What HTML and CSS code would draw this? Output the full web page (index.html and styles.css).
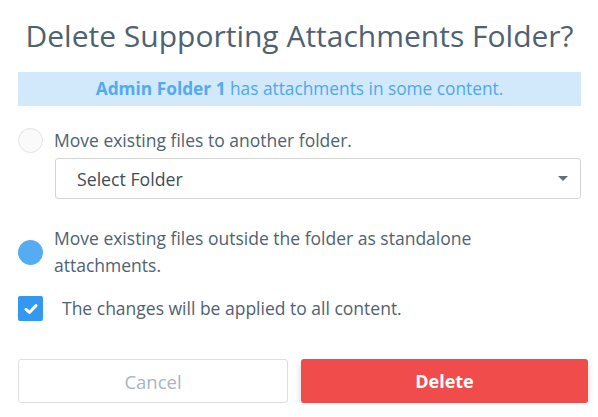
FILE: index.html
```html
<!DOCTYPE html>
<html>
<head>
<meta charset="utf-8">
<link rel="stylesheet" href="styles.css">
</head>
<body>
<div class="dialog">
  <h1 class="title">Delete Supporting Attachments Folder?</h1>
  <div class="banner"><strong>Admin Folder 1</strong> has attachments in some content.</div>
  <div class="option">
    <span class="radio"></span>
    <span class="label">Move existing files to another folder.</span>
  </div>
  <div class="select">
    <span>Select Folder</span>
    <span class="caret"></span>
  </div>
  <div class="option option-two">
    <span class="radio radio-on"></span>
    <span class="label">Move existing files outside the folder as standalone attachments.</span>
  </div>
  <div class="check-row">
    <span class="checkbox">
      <svg width="16" height="16" viewBox="0 0 16 16"><path d="M3 8.3 L6.4 11.5 L13 4.6" fill="none" stroke="#fff" stroke-width="3" stroke-linecap="round" stroke-linejoin="round"/></svg>
    </span>
    <span class="label">The changes will be applied to all content.</span>
  </div>
  <div class="buttons">
    <button class="btn btn-cancel">Cancel</button>
    <button class="btn btn-delete">Delete</button>
  </div>
</div>
</body>
</html>
```

FILE: styles.css
```css
html, body {
  margin: 0;
  padding: 0;
  background: #fff;
}
body {
  font-family: "Open Sans", "Liberation Sans", sans-serif;
  color: #4f6272;
}
.dialog {
  width: 598px;
  box-sizing: border-box;
  padding: 16px 17px 0 18px;
}
.title {
  margin: 0;
  font-weight: 400;
  font-size: 30px;
  line-height: 40px;
  text-align: center;
  color: #4f6272;
  white-space: nowrap;
}
.banner {
  margin-top: 16px;
  height: 34px;
  background: #d2e8fb;
  color: #4ea8ee;
  font-size: 17.3px;
  line-height: 34px;
  text-align: center;
  white-space: nowrap;
}
.banner strong {
  font-weight: 700;
  color: #52aaf0;
}
.option {
  display: flex;
  align-items: center;
  margin-top: 21px;
}
.radio {
  flex: 0 0 auto;
  width: 23px;
  height: 23px;
  border: 1px solid #e3e3e3;
  background: #fafafa;
  border-radius: 50%;
}
.radio-on {
  width: 25px;
  height: 25px;
  border: 0;
  background: #55acf3;
}
.label {
  margin-left: 11px;
  font-size: 17.5px;
  line-height: 27px;
}
.select {
  margin: 4px 0 0 37px;
  height: 41px;
  box-sizing: border-box;
  border: 1px solid #d4d4d4;
  border-radius: 3px;
  display: flex;
  align-items: center;
  justify-content: space-between;
  padding: 0 12px 0 21px;
  font-size: 17.7px;
  color: #3d4c57;
}
.caret {
  width: 0;
  height: 0;
  border-left: 5px solid transparent;
  border-right: 5px solid transparent;
  border-top: 5px solid #5c707d;
}
.option-two {
  margin-top: 26px;
}
.option-two .label {
  width: 500px;
}
.check-row {
  display: flex;
  align-items: center;
  margin-top: 16px;
}
.checkbox {
  flex: 0 0 auto;
  width: 25px;
  height: 25px;
  border-radius: 2px;
  background: #3399f0;
  display: flex;
  align-items: center;
  justify-content: center;
}
.check-row .label {
  margin-left: 19px;
}
.buttons {
  display: grid;
  grid-template-columns: 270px 287px;
  column-gap: 13px;
  margin-top: 37px;
}
.btn {
  height: 44px;
  border-radius: 3px;
  font-family: "Open Sans", "Liberation Sans", sans-serif;
  font-size: 18.5px;
  cursor: pointer;
}
.btn-cancel {
  background: #fff;
  border: 1px solid #dcdfe2;
  color: #a9b5bd;
}
.btn-delete {
  background: #ef4c4b;
  border: 0;
  color: #fff;
  font-weight: 700;
  font-size: 18px;
  box-shadow: 0 3px 6px rgba(0,0,0,0.18);
}
```
